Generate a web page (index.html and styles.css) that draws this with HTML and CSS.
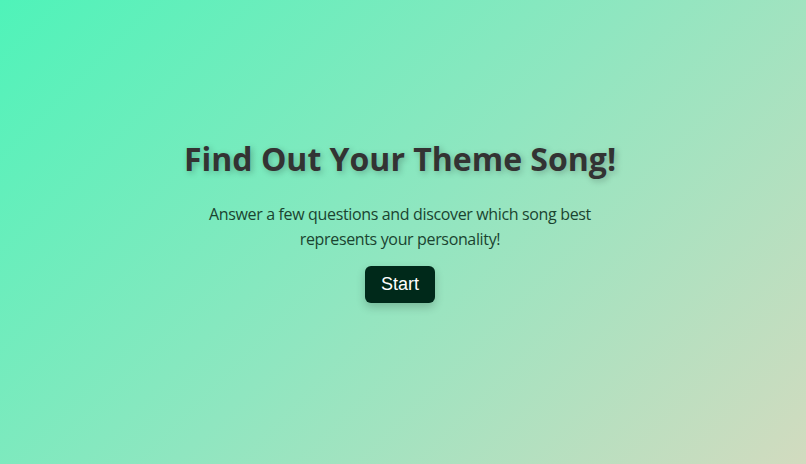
FILE: index.html
```html
<!DOCTYPE html>
<html>
<head>
<meta charset="utf-8">
<link rel="stylesheet" href="styles.css">
</head>
<body>
<main class="screen">
  <h1 class="title">Find Out Your Theme Song!</h1>
  <p class="lead">Answer a few questions and discover which song best represents your personality!</p>
  <button class="start">Start</button>
</main>
</body>
</html>
```
FILE: styles.css
```css
html, body {
  margin: 0;
  height: 100%;
}
body {
  background: linear-gradient(135deg, #4ff3b9 0%, #8fe6c0 50%, #d2dbbf 100%);
  font-family: "Open Sans", "DejaVu Sans", sans-serif;
  color: #333;
}
.screen {
  height: 100%;
  display: flex;
  flex-direction: column;
  align-items: center;
  justify-content: center;
  padding: 0 6px 24px 0;
  box-sizing: border-box;
  text-align: center;
}
.title {
  margin: 0 0 22px;
  font-size: 32px;
  font-weight: 700;
  color: #333;
  text-shadow: 2px 2px 6px rgba(0,0,0,0.25);
}
.lead {
  margin: 0 0 14px;
  max-width: 400px;
  font-size: 16px;
  line-height: 25px;
  letter-spacing: -0.35px;
  color: #1a4430;
}
.start {
  font-family: "Liberation Sans", Arial, sans-serif;
  font-size: 18px;
  color: #fff;
  background: #00291a;
  border: none;
  border-radius: 6px;
  padding: 8px 16px;
  box-shadow: 0 4px 10px rgba(0,0,0,0.2);
}
```
